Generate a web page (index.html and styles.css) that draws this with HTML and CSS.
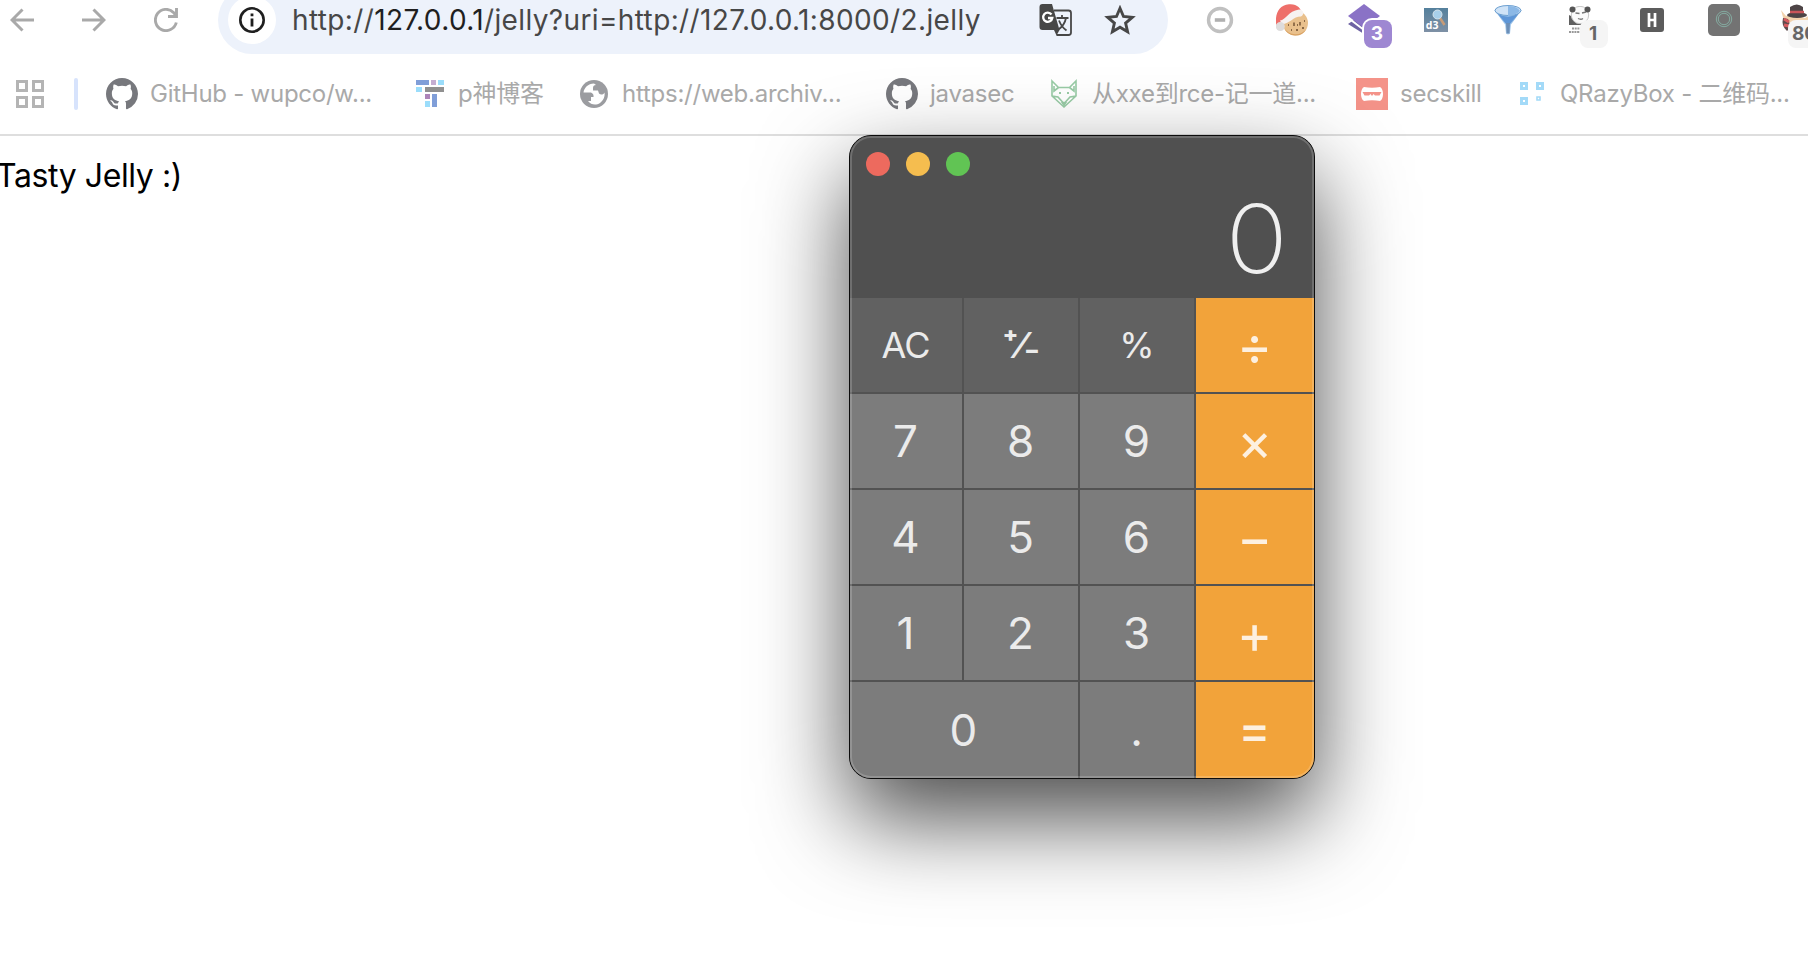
FILE: index.html
```html
<!DOCTYPE html>
<html lang="zh-CN">
<head>
<meta charset="utf-8">
<title>127.0.0.1/jelly</title>
<link rel="stylesheet" href="styles.css">
</head>
<body>
<header class="toolbar">
  <nav class="nav">
    <svg width="24" height="24" viewBox="0 0 24 24"><path d="M24 12H2M12.500 1.500L2 12l10.500 10.500" fill="none" stroke="#a9a9a9" stroke-width="3"/></svg>
    <svg width="24" height="24" viewBox="0 0 24 24"><path d="M0 12h22M11.500 1.500L22 12 11.500 22.500" fill="none" stroke="#a9a9a9" stroke-width="3"/></svg>
    <svg width="24" height="24" viewBox="0 0 24 24"><path d="M22.300 14.500A10.600 10.600 0 1 1 19.800 4.800L22 8M22.500 0V8.500H14" fill="none" stroke="#a9a9a9" stroke-width="2.900"/></svg>
  </nav>
  <div class="address">
    <span class="info"><svg width="26" height="26" viewBox="0 0 26 26"><circle cx="13" cy="13" r="11.700" fill="none" stroke="#1f1f1f" stroke-width="2.600"/><path d="M13 11.500V19.500M13 6.500V9.300" stroke="#1f1f1f" stroke-width="2.800"/></svg></span>
    <span class="url">http://<b>127.0.0.1</b>/jelly?uri=http://127.0.0.1:8000/2.jelly</span>
    <svg class="translate" width="34" height="34" viewBox="0 0 34 34"><path d="M15 7.500H29.500A2.500 2.500 0 0 1 32 10V29.500A2.500 2.500 0 0 1 29.500 32H17.500" fill="none" stroke="#474747" stroke-width="1.800"/><path d="M3.500 1H13L20.500 27H3.500A3 3 0 0 1 .5 24V4A3 3 0 0 1 3.500 1Z" fill="#474747"/><path d="M15 27h5.500l-3 5.500z" fill="#474747"/><path d="M12.500 11.500A4.600 4.600 0 1 0 13.300 15H9" fill="none" stroke="#fff" stroke-width="2.300"/><path d="M17.500 15H29.500M23 12V15M27 15C26 20 23 24 19.500 26.500M20 17.500C21.500 21.500 24 25 27.500 27.500" fill="none" stroke="#474747" stroke-width="1.800"/></svg>
    <svg class="star" width="32" height="30" viewBox="0 0 32 30"><path d="M16 3.300L19.500 11.500 28.300 12.300 21.600 18.100 23.600 26.800 16 22.200 8.400 26.800 10.400 18.100 3.700 12.300 12.500 11.500Z" fill="none" stroke="#474747" stroke-width="2.900"/></svg>
  </div>
  <div class="extensions">
    <span class="ext"><svg width="28" height="28" viewBox="0 0 28 28"><circle cx="14" cy="14" r="11.500" fill="none" stroke="#c0c0c0" stroke-width="3.400"/><path d="M8.800 14h10.400" stroke="#b0b0b0" stroke-width="3.600"/></svg></span>
    <span class="ext"><svg width="32" height="32" viewBox="0 0 32 32"><circle cx="19.500" cy="19" r="12.500" fill="#e9c08c"/><path d="M8 24a12.500 12.500 0 0 0 22.500 1 14 14 0 0 1-22.500-1z" fill="#d9a263"/><path d="M18 18.500v3.500M24 18v3.500M20 26h2M26 24h2M21 21h1M15 26h1M28 17h1M12 21h1" stroke="#8a6845" stroke-width="1.800"/><path d="M0 21C-1 11 2 1 13 0.200 21 -.5 25 4 26 10L5 18Z" fill="#ee6f6a"/><path d="M4 16.500C10 16 12 7 23 5.500c5 0 5.500 5.500 2 7-8 0-11 7-19 8z" fill="#f6f2f1"/><circle cx="4.300" cy="22.500" r="4.500" fill="#dedcdc"/></svg></span>
    <span class="ext"><svg width="32" height="32" viewBox="0 0 32 32"><path d="M0 20l6-4 26 0-16 14z" fill="#6d62a3"/><path d="M-1 13L16 26" stroke="#fff" stroke-width="2"/><path d="M16 0L32 12 16 24 0 12Z" fill="#8a72c6"/></svg><i class="badge badge-violet">3</i></span>
    <span class="ext"><svg width="24" height="24" viewBox="0 0 24 24"><defs><linearGradient id="d" x2="0" y2="1"><stop stop-color="#54809c"/><stop offset="1" stop-color="#7e90a5"/></linearGradient></defs><path d="M0 0h24v24H0z" fill="url(#d)"/><path d="M16 10l4.500 7" stroke="#c69b78" stroke-width="2.600"/><circle cx="13.500" cy="6.500" r="4.500" fill="#a8d0ea" stroke="#d7e3eb"/><text x="1.800" y="20.500" class="d3">d3</text></svg></span>
    <span class="ext"><svg width="28" height="30" viewBox="0 0 28 30"><defs><linearGradient id="f"><stop stop-color="#76a9dc"/><stop offset=".5" stop-color="#b9d8f4"/><stop offset="1" stop-color="#4c87c7"/></linearGradient></defs><path d="M.5 5L11 19.500 12 28.500q2 2 4 0L17 19.500 27.500 5z" fill="url(#f)"/><path d="M4 9l8 10 4 0 8-10q-10 5-20 0z" fill="#5e96d7"/><path d="M12 18h4l-.5 10.500h-3z" fill="#6c8fb8"/><ellipse cx="14" cy="5.500" rx="13" ry="5" fill="#cfe3f7" stroke="#6c9fd0"/><path d="M14 1v10q7 0 12-5-3-5-12-5z" fill="#8bb8e6"/></svg></span>
    <span class="ext"><svg width="24" height="28" viewBox="0 0 24 28"><path d="M1 9v10h13l-5-6z" fill="#606060"/><circle cx="12" cy="9" r="8.700" fill="#fafafa" stroke="#c5c5c5"/><circle cx="4.500" cy="3.500" r="3" fill="#555"/><circle cx="19.500" cy="3.500" r="3" fill="#555"/><path d="M7.500 7l4 .5M14 7l4-1M10 12.500q3 1.500 5 0" stroke="#777" stroke-width="1.300" fill="none"/><path d="M4 22.500h8M1 26h14" stroke="#999" stroke-width="1.800" stroke-dasharray="2 .7"/></svg><i class="badge">1</i></span>
    <span class="ext"><svg width="24" height="24" viewBox="0 0 24 24"><rect width="24" height="24" rx="3" fill="#5c5c5c"/><path d="M9 5v14M15 5v14M9 12h6" stroke="#fff" stroke-width="2.700"/></svg></span>
    <span class="ext"><svg width="32" height="32" viewBox="0 0 32 32"><rect width="32" height="32" rx="5" fill="#737373"/><circle cx="16" cy="15" r="7.700" fill="none" stroke="#86b0a5" stroke-width=".9"/><circle cx="16" cy="15" r="5.700" fill="none" stroke="#86b0a5" stroke-width=".9"/></svg></span>
    <span class="ext"><svg width="32" height="32" viewBox="0 0 32 32"><path d="M1 6l5 6 7-2 12 4 7-4v15H10L4 17z" fill="#f2d3ad"/><path d="M3 14q-2 8 4 13l4-4-3-8z" fill="#5e4b4d"/><path d="M4 15l5 3M4 21l5 1" stroke="#d85c60" stroke-width="3"/><ellipse cx="17" cy="11" rx="10" ry="3" fill="#4d4446"/><path d="M10 3q7-5 13 0v8H10z" fill="#4d4446"/><path d="M10 8h14" stroke="#c9555a" stroke-width="2.500"/></svg><i class="badge badge-wide">80</i></span>
  </div>
</header>
<nav class="bookmarks">
  <span class="apps"><svg width="28" height="28" viewBox="0 0 28 28"><path d="M1.500 1.500h9v9h-9zM17.500 1.500h9v9h-9zM1.500 17.500h9v9h-9zM17.500 17.500h9v9h-9z" fill="none" stroke="#b4b4b4" stroke-width="3"/></svg></span>
  <span class="divider"></span>
  <a class="mark"><svg class="ico" viewBox="0 0 16 16"><path fill="#77787d" d="M8 0C3.580 0 0 3.580 0 8c0 3.540 2.290 6.530 5.470 7.590.4.070.55-.17.55-.38 0-.19-.01-.82-.01-1.490-2.010.37-2.530-.49-2.690-.94-.09-.23-.48-.94-.82-1.130-.28-.15-.68-.52-.01-.53.63-.01 1.080.58 1.230.82.72 1.210 1.870.87 2.330.66.07-.52.28-.87.51-1.070-1.780-.2-3.640-.89-3.640-3.950 0-.87.31-1.590.82-2.150-.08-.2-.36-1.020.08-2.120 0 0 .67-.21 2.200.82a7.600 7.600 0 0 1 4 0c1.530-1.040 2.200-.82 2.200-.82.44 1.100.16 1.920.08 2.120.51.56.82 1.270.82 2.150 0 3.070-1.870 3.750-3.650 3.950.29.25.54.73.54 1.480 0 1.070-.01 1.930-.01 2.200 0 .21.15.46.55.38A8.010 8.010 0 0 0 16 8c0-4.420-3.580-8-8-8z"/></svg><span class="label">GitHub - wupco/w...</span></a>
  <a class="mark"><svg class="ico" viewBox="0 0 32 32"><path d="M2 2h13v5H2zM18 16h5v13h-5z" fill="#809ed8"/><path d="M17 2h5v5h-5z" fill="#c5aed2"/><path d="M11 16h5v5h-5z" fill="#ad85b9"/><path d="M24 2h6v5h-6zM2 9h6v5H2zM11 23h5v6h-5z" fill="#9bddfb"/><path d="M11 9h19v5H11z" fill="#909090"/></svg><span class="label">p神博客</span></a>
  <a class="mark"><svg class="ico" viewBox="0 0 32 32"><circle cx="16" cy="16" r="14" fill="#9b9ca0"/><path d="M16 5.500C10 5.500 6 10 5.500 14.500H12c2 0 4 1.500 3.500 4.500h-2.500v4H10c3 4 8 4.500 12 2 4-3 5-7 4.500-10.500-1 2.500-4 2.500-5.500 1l-1-3h-5v-2.500c0-2 1-3 3-3z" fill="#fff"/></svg><span class="label">https://web.archiv...</span></a>
  <a class="mark"><svg class="ico" viewBox="0 0 16 16"><path fill="#77787d" d="M8 0C3.580 0 0 3.580 0 8c0 3.540 2.290 6.530 5.470 7.590.4.070.55-.17.55-.38 0-.19-.01-.82-.01-1.490-2.010.37-2.530-.49-2.690-.94-.09-.23-.48-.94-.82-1.130-.28-.15-.68-.52-.01-.53.63-.01 1.080.58 1.230.82.72 1.210 1.870.87 2.330.66.07-.52.28-.87.51-1.070-1.780-.2-3.640-.89-3.640-3.950 0-.87.31-1.590.82-2.150-.08-.2-.36-1.020.08-2.120 0 0 .67-.21 2.200.82a7.600 7.600 0 0 1 4 0c1.530-1.040 2.200-.82 2.200-.82.44 1.100.16 1.920.08 2.120.51.56.82 1.270.82 2.150 0 3.070-1.870 3.750-3.650 3.950.29.25.54.73.54 1.480 0 1.070-.01 1.930-.01 2.200 0 .21.15.46.55.38A8.010 8.010 0 0 0 16 8c0-4.420-3.580-8-8-8z"/></svg><span class="label">javasec</span></a>
  <a class="mark"><svg class="ico" viewBox="0 0 32 32"><path d="M4 3L10.500 9.500h11L28 3v15L16 29 4 18ZM4 18l6 1 5 5.500h2l5-5.500 6-1M6 8v5l4.500-3.500M26 8v5l-4.500-3.500" fill="none" stroke="#98cba5" stroke-width="1.600"/><path d="M13 24h6l-3 5zM11 14h2v2h-2zM19 14h2v2h-2z" fill="#98cba5"/></svg><span class="label">从xxe到rce-记一道...</span></a>
  <a class="mark"><svg class="ico" viewBox="0 0 32 32"><path d="M0 0h32v32H0z" fill="#f49389"/><path d="M8 9q8 1.500 16 0c2 1 3 4 3 7s-1 6-3 7q-8-1.500-16 0c-2-1-3-4-3-7s1-6 3-7z" fill="#fff"/><path d="M6.500 14h19l-2 3.500h-4.500l-1.500-1.500-1.500 2-1.500-2-1.500 1.500H8.500z" fill="#f49389"/></svg><span class="label">secskill</span></a>
  <a class="mark"><svg class="ico" viewBox="0 0 32 32"><path d="M5.500 5.500h5v5h-5zM21.500 5.500h5v5h-5zM5.500 20.500h5v5h-5z" fill="none" stroke="#a3daf8" stroke-width="3"/><path d="M21 19h3v3h-3z" fill="none" stroke="#a3daf8" stroke-width="1.600"/></svg><span class="label">QRazyBox - 二维码...</span></a>
</nav>
<main class="page">Tasty Jelly :)</main>

<section class="calc">
  <div class="screen">
    <div class="lights"><i class="red"></i><i class="yellow"></i><i class="green"></i></div>
    <output class="result">0</output>
  </div>
  <div class="keys">
    <button class="key fn"><span>AC</span></button><button class="key fn"><span class="sign">⁺⁄<i>₋</i></span></button><button class="key fn"><span>%</span></button><button class="key op"><span>÷</span></button>
    <button class="key"><span>7</span></button><button class="key"><span>8</span></button><button class="key"><span>9</span></button><button class="key op"><span>×</span></button>
    <button class="key"><span>4</span></button><button class="key"><span>5</span></button><button class="key"><span>6</span></button><button class="key op"><span>−</span></button>
    <button class="key"><span>1</span></button><button class="key"><span>2</span></button><button class="key"><span>3</span></button><button class="key op"><span>+</span></button>
    <button class="key wide"><span>0</span></button><button class="key"><span>.</span></button><button class="key op equals"><span>=</span></button>
  </div>
</section>
</body>
</html>
```
FILE: styles.css
```css
* { box-sizing: border-box; }
body {
  margin: 0;
  height: 958px;
  overflow: hidden;
  position: relative;
  background: #fff;
  font-family: Inter, "Noto Sans CJK SC", sans-serif;
}
svg { display: block; flex: none; }
i { font-style: normal; }

.toolbar { display: flex; height: 54px; overflow: hidden; }
.nav { display: flex; gap: 48px; width: 218px; padding: 8px 0 0 10px; flex: none; }
.address {
  display: flex;
  align-items: center;
  width: 950px;
  height: 68px;
  margin-top: -14px;
  padding-left: 10px;
  border-radius: 34px;
  background: #edf2fb;
  flex: none;
}
.info {
  display: flex;
  align-items: center;
  justify-content: center;
  width: 48px;
  height: 48px;
  border-radius: 50%;
  background: #fff;
  flex: none;
}
.url {
  width: 747px;
  margin-left: 16px;
  font-size: 28px;
  line-height: 40px;
  letter-spacing: .37px;
  color: #474747;
  white-space: nowrap;
}
.url b { font-weight: 400; color: #1f1f1f; }
.star { margin-left: 31px; }

.extensions {
  display: grid;
  grid-template-columns: repeat(9, 72px);
  margin-left: 16px;
  height: 40px;
  flex: none;
}
.ext { display: flex; align-items: center; justify-content: center; position: relative; }
.badge {
  position: absolute;
  left: 36px;
  top: 20px;
  width: 28px;
  height: 28px;
  border-radius: 8px;
  background: #f5f5f5;
  color: #666;
  font: 700 19px/28px Inter, sans-serif;
  text-align: center;
  white-space: nowrap;
}
.badge:not(.badge-wide) { text-indent: -2px; }
.badge-violet { background: #9e87d2; color: #fff; box-shadow: 0 0 0 2px #fff; }
.badge-wide { left: 28px; width: 36px; padding-left: 4px; text-align: left; }
.d3 { font: 700 10.500px "Open Sans", sans-serif; fill: #fff; }

.bookmarks {
  display: grid;
  grid-template-columns: 58px 32px 308px 164px 308px 162px 308px 160px 290px;
  padding-left: 16px;
  height: 82px;
  padding-top: 24px;
  border-bottom: 2px solid #dedede;
}
.apps { padding-top: 2px; }
.divider { width: 4px; height: 32px; border-radius: 2px; background: #d7e3fc; }
.mark { display: flex; gap: 12px; height: 32px; align-items: center; }
.ico { width: 32px; height: 32px; }
.label {
  font-size: 24px;
  font-weight: 420;
  line-height: 32px;
  letter-spacing: -.25px;
  color: #a9a9a9;
  white-space: nowrap;
}

.page {
  padding-top: 16px;
  margin-left: -4px;
  font-size: 32px;
  line-height: 47px;
  letter-spacing: -.4px;
  color: #000;
}

.calc {
  position: absolute;
  left: 849px;
  top: 135px;
  width: 466px;
  height: 644px;
  border: 1px solid #0c0c0c;
  border-radius: 22px;
  overflow: hidden;
  background: #525252;
  box-shadow: 0 40px 90px rgba(0, 0, 0, .7);
}
.calc::after {
  content: "";
  position: absolute;
  inset: 0;
  border-radius: 21px;
  box-shadow: inset 0 0 0 2px rgba(255, 255, 255, .18);
  pointer-events: none;
}
.screen { display: flex; flex-direction: column; height: 162px; background: #505050; }
.lights { display: flex; gap: 16px; padding: 16px 0 0 16px; }
.lights i { width: 24px; height: 24px; border-radius: 50%; }
.red { background: #ed6a5e; }
.yellow { background: #f5bd4f; }
.green { background: #61c454; }
.result {
  align-self: flex-end;
  margin-right: 27px;
  color: #efefef;
  font-size: 95px;
  font-weight: 220;
  line-height: 125px;
  transform: scaleX(1.09);
  transform-origin: 88% 50%;
}
.keys {
  display: grid;
  grid-template-columns: 112px 114px 114px 118px;
  grid-template-rows: repeat(4, 94px) 96px;
  gap: 2px;
}
.key {
  display: flex;
  align-items: center;
  justify-content: center;
  padding: 0 1px 0 0;
  border: 0;
  background: #7c7c7c;
  color: #ebebeb;
  font: 440 44px/50px Inter, sans-serif;
}
.wide { grid-column: span 2; }
.fn { background: #616161; font-size: 36px; letter-spacing: -1px; }
.sign { font-weight: 650; letter-spacing: -1.500px; }
.sign i { position: relative; top: -5px; }
.op {
  padding-top: 1px;
  background: #f2a33a;
  color: #fdf0e0;
  font-size: 54px;
  font-weight: 380;
}
.equals { padding-top: 0; font-size: 48px; font-weight: 550; }
```
